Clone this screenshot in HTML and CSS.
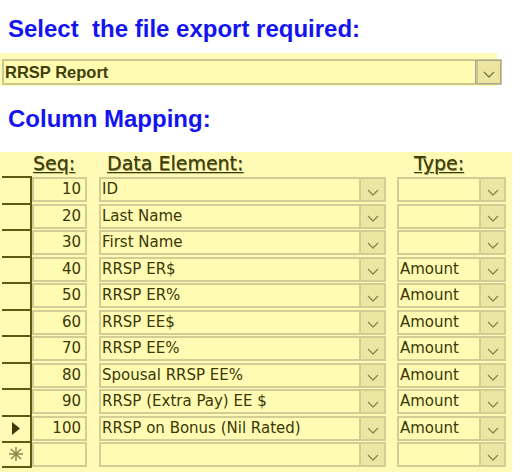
FILE: index.html
```html
<!DOCTYPE html>
<html lang="en">
<head>
    <meta charset="UTF-8">
    <title>Export Setup</title>
    <link rel="stylesheet" href="styles.css">
</head>
<body>
    <h1 class="title">Select&nbsp; the file export required:</h1>
    <div class="band">
        <div class="combo">
            <span class="combo-text">RRSP Report</span>
            <span class="drop"><svg width="12" height="7" viewBox="0 0 12 7"><path d="M1 1 L6 6 L11 1" fill="none" stroke="#7d7946" stroke-width="1.4"/></svg></span>
        </div>
    </div>
    <h1 class="title sub">Column Mapping:</h1>
    <div class="grid">
        <div class="head">
            <span class="h-sel"></span>
            <span class="h-seq">Seq:</span>
            <span class="h-data">Data Element:</span>
            <span class="h-type">Type:</span>
        </div>
        <div id="rows"></div>
    </div>
    <script>
        const data = [
            [10, "ID", ""],
            [20, "Last Name", ""],
            [30, "First Name", ""],
            [40, "RRSP ER$", "Amount"],
            [50, "RRSP ER%", "Amount"],
            [60, "RRSP EE$", "Amount"],
            [70, "RRSP EE%", "Amount"],
            [80, "Spousal RRSP EE%", "Amount"],
            [90, "RRSP (Extra Pay) EE $", "Amount"],
            [100, "RRSP on Bonus (Nil Rated)", "Amount"],
            ["", "", ""],
        ];

        const chevron = '<span class="drop"><svg width="12" height="7" viewBox="0 0 12 7"><path d="M1 1 L6 6 L11 1" fill="none" stroke="#8a8652" stroke-width="1.3"/></svg></span>';
        const rows = document.getElementById("rows");

        data.forEach((d, i) => {
            let mark = "";
            if (i === 9) mark = '<svg width="8" height="13" viewBox="0 0 8 13"><path d="M0 0 L8 6.5 L0 13 Z" fill="#3d3a05"/></svg>';
            if (i === data.length - 1) mark = '<svg width="14" height="14" viewBox="0 0 14 14"><path d="M7 0 V14 M0 7 H14 M2 2 L12 12 M12 2 L2 12" stroke="#8d8a55" stroke-width="1.5"/></svg>';
            const row = document.createElement("div");
            row.className = "row" + (i === data.length - 1 ? " last" : "");
            row.innerHTML =
                `<div class="sel">${mark}</div>` +
                `<div class="box seq">${d[0]}</div>` +
                `<div class="box field"><span class="txt">${d[1]}</span>${chevron}</div>` +
                `<div class="box field type"><span class="txt">${d[2]}</span>${chevron}</div>`;
            rows.appendChild(row);
        });
    </script>
</body>
</html>
```

FILE: styles.css
```css
* {
    margin: 0;
    padding: 0;
    box-sizing: border-box;
}

body {
    width: 520px;
    height: 475px;
    background: white;
    font-family: "DejaVu Sans", Tahoma, sans-serif;
    overflow: hidden;
}

.title {
    font-family: "Liberation Sans", Arial, sans-serif;
    font-size: 24px;
    font-weight: bold;
    color: #1414f0;
    padding: 14px 0 0 8px;
    height: 53px;
    line-height: 30px;
    white-space: nowrap;
}

.title.sub {
    padding-top: 18px;
    height: 66px;
}

.band {
    width: 497px;
    height: 33px;
    background: #fffbb9;
    padding-top: 6px;
}

.combo {
    display: flex;
    width: 500px;
    height: 26px;
    margin-left: 2px;
    border: 2px solid #cbc78f;
    background: #fffbb1;
}

.combo-text {
    flex: 1;
    font-family: "Liberation Sans", Arial, sans-serif;
    font-weight: bold;
    font-size: 16.5px;
    color: #3f3f0c;
    line-height: 22px;
    padding-left: 1px;
}

.combo .drop {
    width: 24px;
    border-left: 2px solid #c9c58d;
    background: #ebe59f;
    outline: 1px solid #a9a79a;
}

.drop {
    display: flex;
    align-items: center;
    justify-content: center;
    padding-top: 5px;
}

.grid {
    width: 512px;
    background: #fffab5;
    padding-bottom: 4px;
}

.head,
.row {
    display: grid;
    grid-template-columns: 32px 55px 299px 120px;
}

.head {
    height: 24px;
    font-size: 19px;
    color: #3e3c06;
    line-height: 22px;
}

.head span {
    text-decoration: underline;
    text-underline-offset: 2px;
    text-shadow: 0.5px 0.5px 0 #8a8a50;
}

.h-seq {
    padding-left: 1px;
}

.h-data {
    padding-left: 20px;
}

.h-type {
    padding-left: 28px;
}

.row {
    height: 26.5px;
}

.sel {
    margin-left: 2px;
    border-top: 2px solid #5c5915;
    border-right: 2px solid #5c5915;
    display: flex;
    align-items: center;
    justify-content: center;
}

.row.last .sel {
    border-bottom: 2px solid #5c5915;
}

.box {
    border: 2px solid #d2cd95;
    background: #fffbb3;
    height: 25px;
    margin-top: 1px;
    font-size: 15px;
    color: #3a3805;
    line-height: 21px;
}

.seq {
    text-align: right;
    padding-right: 4px;
}

.field {
    display: flex;
    margin-left: 12px;
}

.field.type {
    margin-left: 11px;
}

.txt {
    flex: 1;
    padding-left: 1px;
    white-space: nowrap;
    overflow: hidden;
}

.field .drop {
    width: 25px;
    background: #ebe6a2;
    border-left: 2px solid #d2cd95;
}
```
